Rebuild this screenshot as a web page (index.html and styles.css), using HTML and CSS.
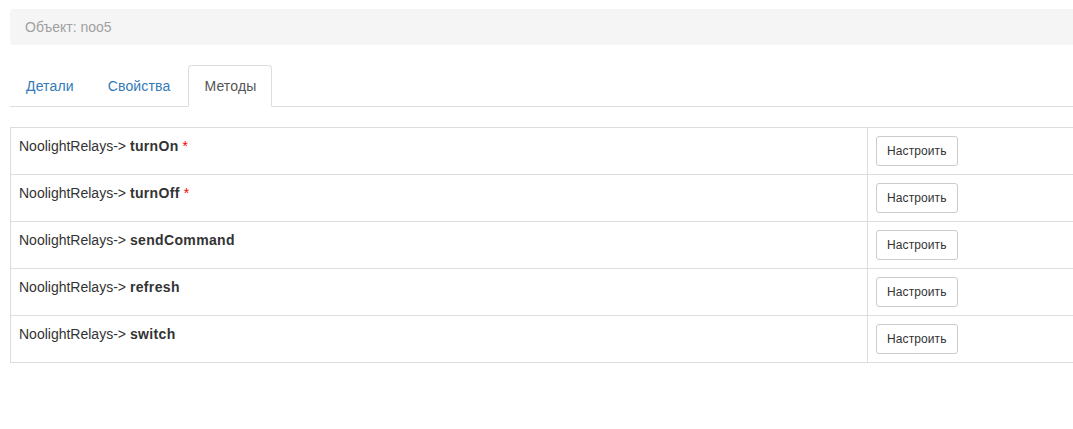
FILE: index.html
```html
<!DOCTYPE html>
<html lang="ru">
<head>
    <meta charset="UTF-8">
    <title>Объект: noo5</title>
    <link rel="stylesheet" href="styles.css">
</head>
<body>
    <div class="page">
        <!-- ХЛЕБНЫЕ КРОШКИ -->
        <ol class="breadcrumb">
            <li class="active">Объект: noo5</li>
        </ol>

        <!-- ВКЛАДКИ -->
        <ul class="nav-tabs">
            <li><a href="#">Детали</a></li>
            <li><a href="#">Свойства</a></li>
            <li class="active"><a href="#">Методы</a></li>
        </ul>

        <!-- ТАБЛИЦА МЕТОДОВ -->
        <table class="table-bordered">
            <tr>
                <td class="name-col">NoolightRelays-&gt; <b>turnOn</b> <span class="req">*</span></td>
                <td><button class="btn">Настроить</button></td>
            </tr>
            <tr>
                <td class="name-col">NoolightRelays-&gt; <b>turnOff</b> <span class="req">*</span></td>
                <td><button class="btn">Настроить</button></td>
            </tr>
            <tr>
                <td class="name-col">NoolightRelays-&gt; <b>sendCommand</b></td>
                <td><button class="btn">Настроить</button></td>
            </tr>
            <tr>
                <td class="name-col">NoolightRelays-&gt; <b>refresh</b></td>
                <td><button class="btn">Настроить</button></td>
            </tr>
            <tr>
                <td class="name-col">NoolightRelays-&gt; <b>switch</b></td>
                <td><button class="btn">Настроить</button></td>
            </tr>
        </table>
    </div>
</body>
</html>
```

FILE: styles.css
```css
/* ОБЩИЕ СТИЛИ */
html, body {
    overflow: hidden;
}

body {
    margin: 0;
    padding: 0;
    background-color: white;
    font-family: "Liberation Sans", Arial, sans-serif;
    font-size: 14px;
    line-height: 20px;
    color: #333;
}

.page {
    width: 1110px;
    padding: 9px 0 0 10px;
}

/* ХЛЕБНЫЕ КРОШКИ */
.breadcrumb {
    margin: 0 0 20px 0;
    padding: 8px 15px;
    list-style: none;
    background-color: #f5f5f5;
    border-radius: 4px;
}

.breadcrumb .active {
    color: #a0a0a0;
}

/* ВКЛАДКИ */
.nav-tabs {
    display: flex;
    margin: 0 0 20px 0;
    padding: 0;
    list-style: none;
    border-bottom: 1px solid #ddd;
}

.nav-tabs li {
    margin-right: 2px;
    margin-bottom: -1px;
}

.nav-tabs a {
    display: block;
    padding: 10px 15px;
    color: #337ab7;
    text-decoration: none;
    letter-spacing: 0.15px;
    border: 1px solid transparent;
    border-radius: 4px 4px 0 0;
}

.nav-tabs .active a {
    color: #555;
    background-color: white;
    border-color: #ddd #ddd transparent;
}

/* ТАБЛИЦА */
.table-bordered {
    width: 100%;
    border-collapse: collapse;
    border: 1px solid #ddd;
}

.table-bordered td {
    padding: 8px;
    vertical-align: top;
    border: 1px solid #ddd;
}

.table-bordered b {
    letter-spacing: 0.35px;
}

.name-col {
    width: 840px;
}

.req {
    color: red;
}

/* КНОПКИ */
.btn {
    display: block;
    padding: 5px 10px;
    font-family: inherit;
    font-size: 12px;
    line-height: 18px;
    letter-spacing: 0.1px;
    color: #333;
    background-color: white;
    border: 1px solid #ccc;
    border-radius: 3px;
    cursor: pointer;
}
```
